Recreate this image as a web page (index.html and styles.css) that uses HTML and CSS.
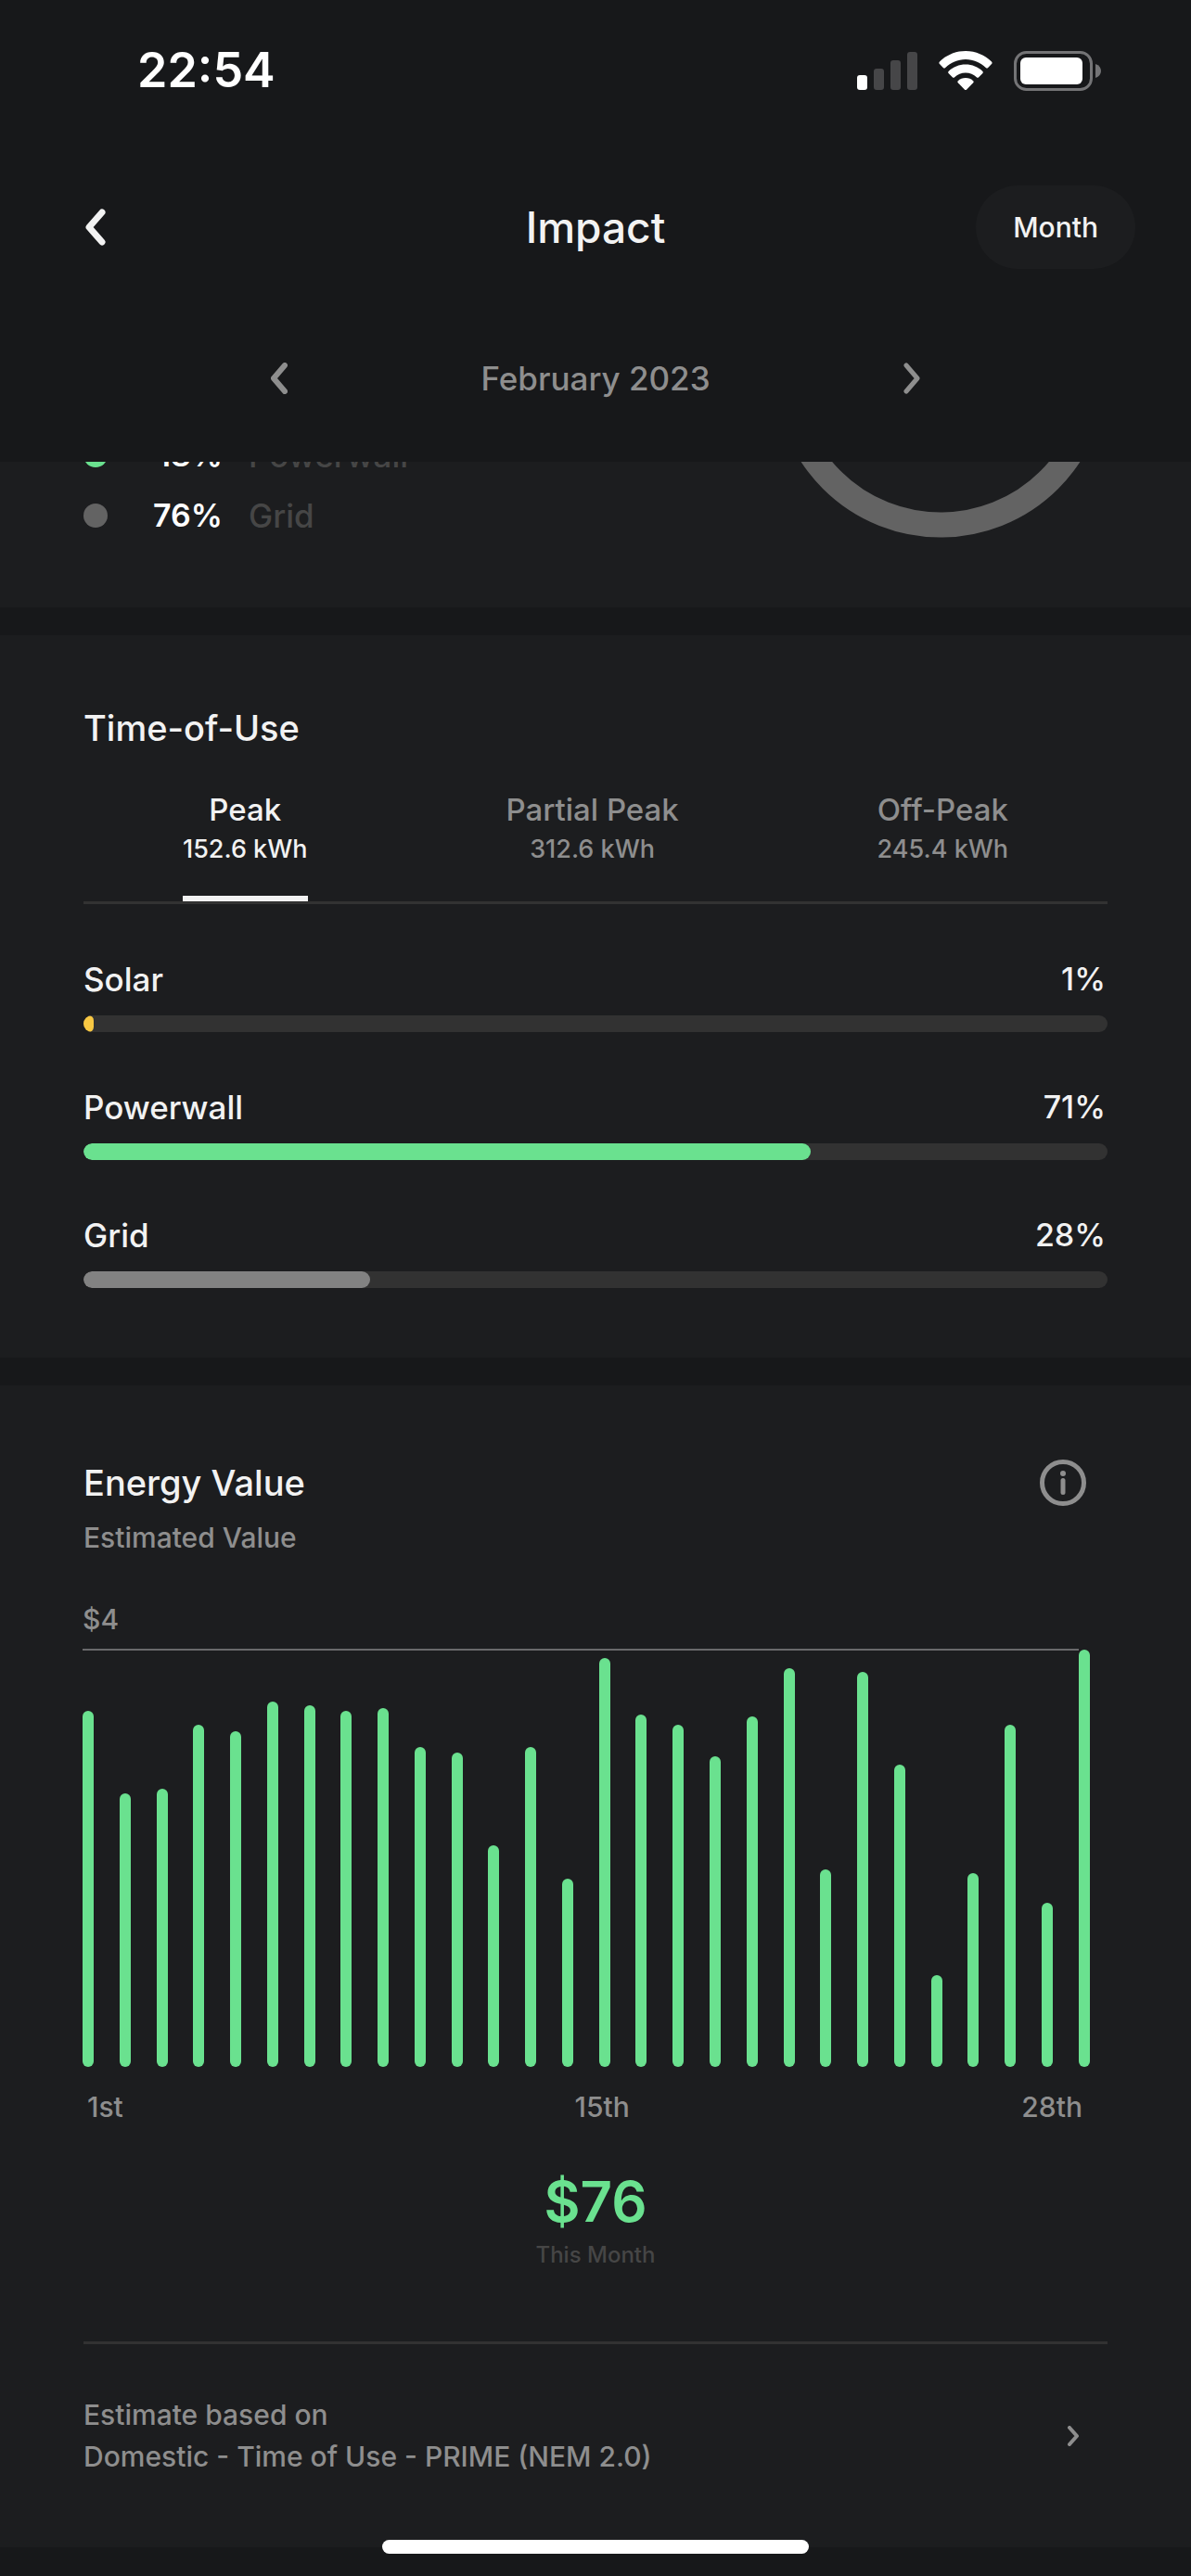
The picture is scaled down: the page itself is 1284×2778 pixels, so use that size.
FILE: index.html
```html
<!DOCTYPE html>
<html lang="en">
<head>
    <meta charset="UTF-8">
    <meta name="viewport" content="width=device-width, initial-scale=1.0">
    <title>Impact</title>
    <link rel="stylesheet" href="styles.css">
</head>
<body>

    <header class="top">
        <div class="status-bar">
            <span class="clock">22:54</span>
            <div class="status-icons">
                <svg width="65" height="43" viewBox="0 0 65 43">
                    <rect x="0" y="26" width="11" height="16" rx="3" fill="#fff"/>
                    <rect x="18" y="19" width="11" height="23" rx="3" fill="#464648"/>
                    <rect x="36" y="10" width="11" height="32" rx="3" fill="#464648"/>
                    <rect x="54" y="1" width="11" height="41" rx="3" fill="#464648"/>
                </svg>
                <svg width="58" height="43" viewBox="0 0 58 43" fill="#fff">
                    <path d="M29 0c11 0 21 4.500 28 11.500.8.8.8 1.800 0 2.600l-3.800 3.800c-.8.8-1.600.8-2.400 0C45 12.500 37.500 9 29 9S13 12.500 7.200 17.900c-.8.8-1.600.8-2.400 0L1 14.100c-.8-.8-.8-1.800 0-2.600C8 4.500 18 0 29 0z"/>
                    <path d="M29 14.500c7 0 13.500 2.700 18.200 7.200.8.8.8 1.700 0 2.500l-4 4c-.8.8-1.600.7-2.400 0-3.100-2.900-7.200-4.700-11.800-4.700s-8.700 1.800-11.800 4.700c-.8.7-1.600.8-2.400 0l-4-4c-.8-.8-.8-1.700 0-2.500C15.500 17.200 22 14.500 29 14.500z"/>
                    <path d="M29 29c3.200 0 6.100 1.200 8.200 3.200.7.7.6 1.400 0 2.100l-7 7.100c-.8.8-1.600.8-2.400 0l-7-7.100c-.6-.7-.7-1.400 0-2.100C22.900 30.200 25.800 29 29 29z"/>
                </svg>
                <svg width="95" height="43" viewBox="0 0 95 43">
                    <rect x="1.500" y="1.500" width="82" height="40" rx="12" fill="none" stroke="#747476" stroke-width="3"/>
                    <rect x="7" y="7" width="67" height="29" rx="6" fill="#fff"/>
                    <path d="M88 14c4 1.500 6 4.300 6 7.500s-2 6-6 7.500z" fill="#747476"/>
                </svg>
            </div>
        </div>

        <nav class="nav-bar">
            <button type="button" class="icon-button back" aria-label="Back">
                <svg width="22" height="40" viewBox="0 0 22 40"><path d="M18 4L4 20l14 16" stroke-width="7"/></svg>
            </button>
            <h1>Impact</h1>
            <button type="button" class="period">Month</button>
        </nav>

        <div class="date-bar">
            <button type="button" class="icon-button" aria-label="Previous month">
                <svg width="18" height="34" viewBox="0 0 18 34"><path d="M15 3L3 17l12 14" stroke-width="6"/></svg>
            </button>
            <span>February 2023</span>
            <button type="button" class="icon-button" aria-label="Next month">
                <svg width="18" height="34" viewBox="0 0 18 34"><path d="M3 3l12 14L3 31" stroke-width="5"/></svg>
            </button>
        </div>
    </header>

    <main>
        <!-- scrolled part way under the header -->
        <section class="sources">
            <ul class="legend">
                <li><i class="dot powerwall"></i><b>18%</b><span>Powerwall</span></li>
                <li><i class="dot grid"></i><b>76%</b><span>Grid</span></li>
            </ul>
            <svg class="donut" width="360" height="360" viewBox="0 0 360 360">
                <circle cx="180" cy="180" r="166" fill="none" stroke="#636363" stroke-width="27"/>
            </svg>
        </section>

        <section class="time-of-use">
            <h2>Time-of-Use</h2>
            <div class="tabs" role="tablist">
                <button type="button" class="tab active" role="tab" aria-selected="true">Peak<small>152.6 kWh</small></button>
                <button type="button" class="tab" role="tab" aria-selected="false">Partial Peak<small>312.6 kWh</small></button>
                <button type="button" class="tab" role="tab" aria-selected="false">Off-Peak<small>245.4 kWh</small></button>
            </div>
            <div class="usage">
                <div class="usage-label"><span>Solar</span><span class="percent">1%</span></div>
                <div class="track"><div class="fill solar" style="width: 1%"></div></div>
            </div>
            <div class="usage">
                <div class="usage-label"><span>Powerwall</span><span class="percent">71%</span></div>
                <div class="track"><div class="fill powerwall" style="width: 71%"></div></div>
            </div>
            <div class="usage">
                <div class="usage-label"><span>Grid</span><span class="percent">28%</span></div>
                <div class="track"><div class="fill grid" style="width: 28%"></div></div>
            </div>
        </section>

        <section class="energy-value">
            <div class="value-head">
                <h2>Energy Value</h2>
                <button type="button" class="icon-button" aria-label="About energy value">
                    <svg width="50" height="50" viewBox="0 0 50 50">
                        <circle cx="25" cy="25" r="22.500" stroke-width="5"/>
                        <circle cx="25" cy="15" r="3" fill="currentColor" stroke="none"/>
                        <path d="M25 22.500v13" stroke-width="5"/>
                    </svg>
                </button>
            </div>
            <p class="subtitle">Estimated Value</p>

            <div class="chart">
                <div class="chart-max">$4</div>
                <div class="bars" id="bars"></div>
                <div class="chart-days"><span>1st</span><span>15th</span><span>28th</span></div>
            </div>

            <div class="total">
                <strong>$76</strong>
                <span>This Month</span>
            </div>

            <a href="#" class="estimate">
                <span>Estimate based on<br>Domestic - Time of Use - PRIME (NEM 2.0)</span>
                <svg width="14" height="22" viewBox="0 0 14 22"><path d="M3 2l8 9-8 9" stroke-width="4"/></svg>
            </a>
        </section>
    </main>

    <div class="home-indicator"></div>

    <script>
        // daily value, in percent of the $4 line
        const days = [85.3, 65.6, 66.7, 82, 80.4, 87.6, 86.7, 85.3, 86, 76.7, 75.3, 53.1, 76.7, 45.1,
            98, 84.4, 82, 74.4, 84, 95.6, 47.3, 94.7, 72.4, 22, 46.4, 82, 39.3, 100];
        const bars = document.getElementById('bars');

        days.forEach(value => {
            const bar = document.createElement('div');
            bar.className = 'bar';
            bar.style.height = value + '%';
            bars.appendChild(bar);
        });
    </script>

</body>
</html>
```
FILE: styles.css
```css
* {
    box-sizing: border-box;
}

body {
    margin: 0;
    background: #17181a;
    color: #f2f2f2;
    font-family: Inter, "Liberation Sans", sans-serif;
    font-weight: 500;
}

h1, h2, p, ul {
    margin: 0;
    padding: 0;
    font-weight: 500;
}

button {
    margin: 0;
    padding: 0;
    border: none;
    background: none;
    color: inherit;
    font: inherit;
    cursor: pointer;
}

svg {
    display: block;
}

.icon-button svg,
.estimate svg {
    fill: none;
    stroke: currentColor;
    stroke-linecap: round;
    stroke-linejoin: round;
}

.top {
    position: relative;
    z-index: 1;
    padding-bottom: 68px;
    background: #17181a;
}

.status-bar {
    display: flex;
    justify-content: space-between;
    align-items: center;
    padding: 44px 96px 0 148px;
}

.clock {
    color: #fff;
    font-size: 52px;
    line-height: 64px;
    font-weight: 600;
}

.status-icons {
    display: flex;
    gap: 23px;
}

.nav-bar {
    display: grid;
    grid-template-columns: 1fr auto 1fr;
    align-items: center;
    padding: 92px 60px 0;
}

.nav-bar h1 {
    font-size: 46px;
    line-height: 56px;
}

.nav-bar .back {
    justify-self: start;
    padding-left: 32px;
}

.period {
    justify-self: end;
    padding: 0 40px;
    border-radius: 45px;
    background: #1c1d1f;
    font-size: 30px;
    line-height: 90px;
}

.date-bar {
    display: flex;
    justify-content: space-between;
    align-items: center;
    margin: 96px auto 0;
    width: 700px;
    color: #8e8e8e;
    font-size: 35px;
    line-height: 44px;
}

section {
    margin-bottom: 30px;
    padding: 0 90px;
    background: #1c1d1f;
}

.sources {
    display: flex;
    justify-content: space-between;
    height: 157px;
    overflow: hidden;
}

.legend {
    list-style: none;
    margin-top: -40px;
}

.legend li {
    display: flex;
    align-items: center;
    height: 65px;
    font-size: 35px;
    color: #464646;
}

.legend b {
    width: 124px;
    color: #fff;
    font-size: 34px;
    font-weight: 600;
    text-align: right;
}

.legend span {
    margin-left: 28px;
}

.dot {
    width: 26px;
    height: 26px;
    border-radius: 50%;
}

.donut {
    margin-top: -278px;
}

.powerwall {
    background: #6ae18f;
}

.dot.grid {
    background: #636363;
}

h2 {
    font-size: 38px;
    line-height: 48px;
}

.time-of-use {
    padding-top: 76px;
    padding-bottom: 75px;
}

.tabs {
    display: flex;
    justify-content: space-around;
    margin-top: 40px;
    border-bottom: 3px solid #323232;
}

.tab {
    display: flex;
    flex-direction: column;
    align-items: center;
    padding-bottom: 32px;
    border-bottom: 6px solid transparent;
    color: #8e8e8e;
    font-size: 33px;
    line-height: 48px;
}

.tab small {
    font-size: 27px;
    line-height: 37px;
}

.tab.active {
    border-color: #f2f2f2;
    color: #f2f2f2;
}

.usage {
    margin-top: 42px;
}

.usage-label {
    display: flex;
    justify-content: space-between;
    font-size: 35px;
    line-height: 78px;
}

.percent {
    padding-right: 2px;
    font-size: 34px;
}

.track {
    height: 18px;
    border-radius: 9px;
    background: #323232;
    overflow: hidden;
}

.fill {
    height: 100%;
    border-radius: 9px;
}

.fill.solar {
    background: #f8c843;
}

.fill.grid {
    background: #828282;
}

.energy-value {
    padding-top: 80px;
}

.value-head {
    display: flex;
    justify-content: space-between;
    align-items: center;
    padding-right: 23px;
    height: 50px;
}

.value-head .icon-button,
.subtitle,
.chart,
.estimate {
    color: #8e8e8e;
}

.subtitle,
.chart,
.estimate {
    font-size: 30px;
    line-height: 45px;
}

.subtitle {
    margin-top: 12px;
}

.chart {
    margin: 43px 19px 0 -1px;
}

.bars {
    position: relative;
    display: flex;
    justify-content: space-between;
    align-items: flex-end;
    margin-top: 10px;
    height: 450px;
}

/* the $4 line, stops short of the last bar */
.bars::before {
    content: "";
    position: absolute;
    top: -1px;
    left: 0;
    right: 12px;
    height: 2px;
    background: #69696b;
}

.bar {
    position: relative;
    width: 12px;
    border-radius: 6px;
    background: #6ae18f;
}

/* 14 days before the 15th, 13 after */
.chart-days {
    display: grid;
    grid-template-columns: 14fr auto 13fr;
    margin-top: 21px;
    padding: 0 8px 0 5px;
}

.chart-days span:last-child {
    text-align: right;
}

.total {
    display: flex;
    flex-direction: column;
    align-items: center;
    padding: 43px 0 73px;
    border-bottom: 3px solid #323232;
}

.total strong {
    color: #6ae18f;
    font-size: 60px;
    line-height: 72px;
    font-weight: 600;
}

.total span {
    margin-top: 2px;
    color: #464646;
    font-size: 24px;
    line-height: 40px;
}

.estimate {
    display: flex;
    justify-content: space-between;
    align-items: center;
    padding: 54px 30px 75px 0;
    text-decoration: none;
}

.home-indicator {
    position: fixed;
    bottom: 24px;
    left: 50%;
    margin-left: -230px;
    width: 460px;
    height: 15px;
    border-radius: 8px;
    background: #fff;
}
```
